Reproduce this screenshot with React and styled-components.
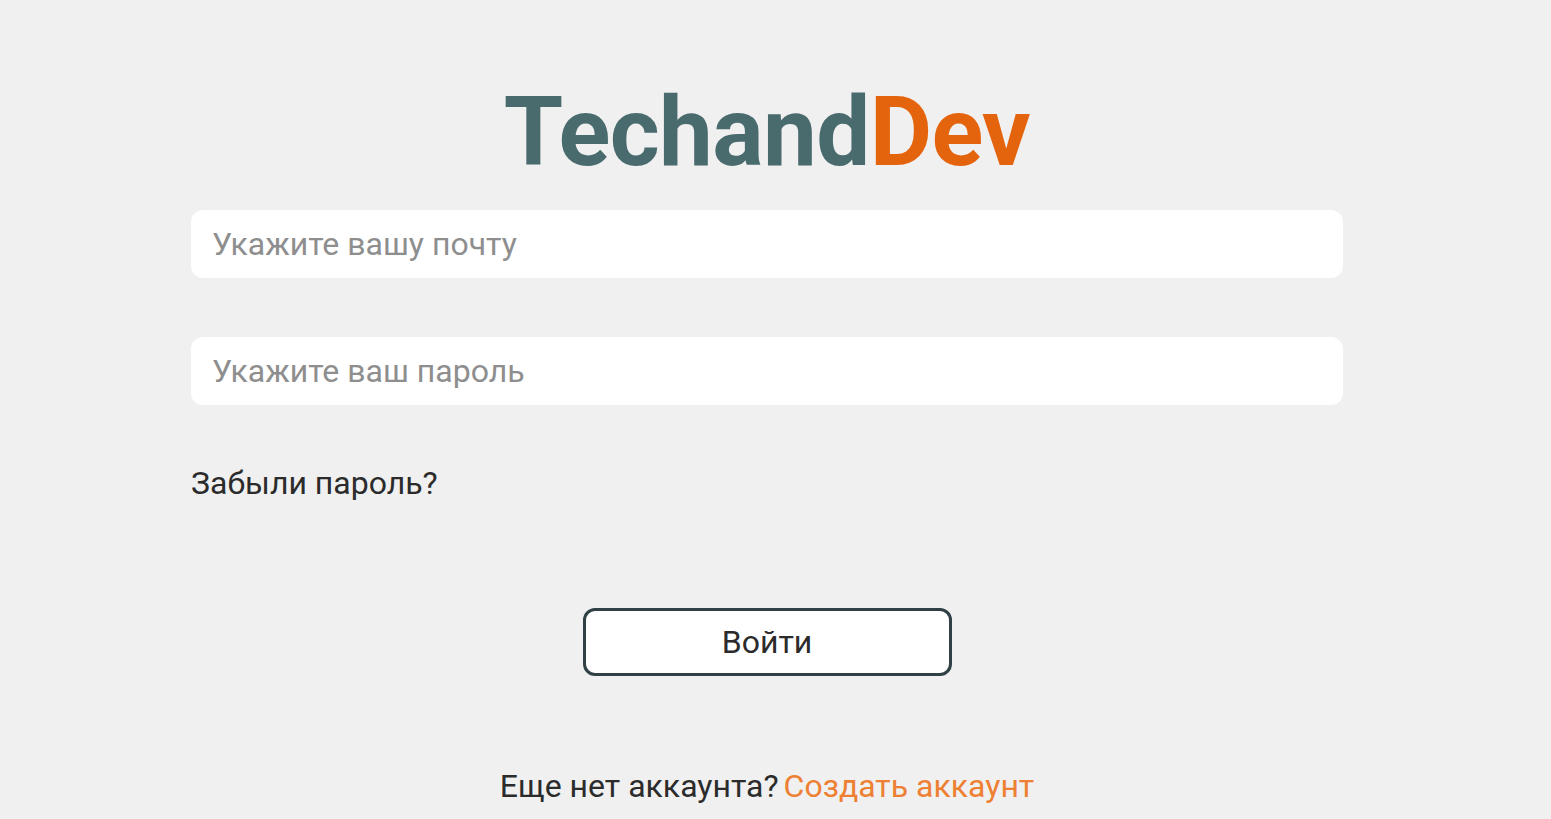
import React from "react";
import styled, { createGlobalStyle } from "styled-components";

const Global = createGlobalStyle`
  html, body { margin: 0; padding: 0; background: #f0f0f0; }
  body { font-family: Roboto, "Noto Sans", Arial, sans-serif; }
  * { box-sizing: border-box; }
`;

const Page = styled.main`
  width: calc(100% - 17px);
  display: flex;
  flex-direction: column;
  align-items: center;
  padding-top: 76px;
`;

const Logo = styled.h1`
  margin: 0;
  font-family: Roboto, sans-serif;
  font-weight: 700;
  font-size: 96px;
  letter-spacing: -0.6px;
  line-height: normal;
  color: #4a6b6e;
`;

const Accent = styled.span`
  color: #e4640e;
`;

const Form = styled.form`
  width: 1152px;
  margin-top: 22px;
  display: flex;
  flex-direction: column;
`;

const Input = styled.input`
  height: 68px;
  width: 100%;
  border: none;
  outline: none;
  border-radius: 12px;
  background: #ffffff;
  padding: 0 21px;
  font-family: Roboto, sans-serif;
  font-size: 32px;
  color: #2b2b2b;
  margin-bottom: ${(p) => p.$gap || 0}px;
  &::placeholder { color: #8e8e8e; }
`;

const Forgot = styled.a`
  font-size: 32px;
  line-height: normal;
  color: #2b2b2b;
  text-decoration: none;
  margin-top: 59px;
  align-self: flex-start;
  cursor: pointer;
`;

const Submit = styled.button`
  align-self: center;
  margin-top: 106px;
  width: 369px;
  height: 68px;
  border: 3px solid #2f4144;
  border-radius: 12px;
  background: #ffffff;
  font-family: Roboto, sans-serif;
  font-size: 32px;
  color: #2b2b2b;
  display: flex;
  align-items: center;
  justify-content: center;
  cursor: pointer;
`;

const Footer = styled.p`
  margin: 91px 0 0;
  font-size: 32px;
  line-height: normal;
  color: #2b2b2b;
`;

const Link = styled.a`
  margin-left: 5px;
  color: #ee8033;
  text-decoration: none;
  cursor: pointer;
`;

export default function App() {
  return (
    <>
      <Global />
      <Page>
        <Logo>
          Techand<Accent>Dev</Accent>
        </Logo>
        <Form onSubmit={(e) => e.preventDefault()}>
          <Input type="email" placeholder="Укажите вашу почту" $gap={59} />
          <Input type="password" placeholder="Укажите ваш пароль" />
          <Forgot>Забыли пароль?</Forgot>
          <Submit type="submit">Войти</Submit>
        </Form>
        <Footer>
          Еще нет аккаунта?<Link>Создать аккаунт</Link>
        </Footer>
      </Page>
    </>
  );
}
